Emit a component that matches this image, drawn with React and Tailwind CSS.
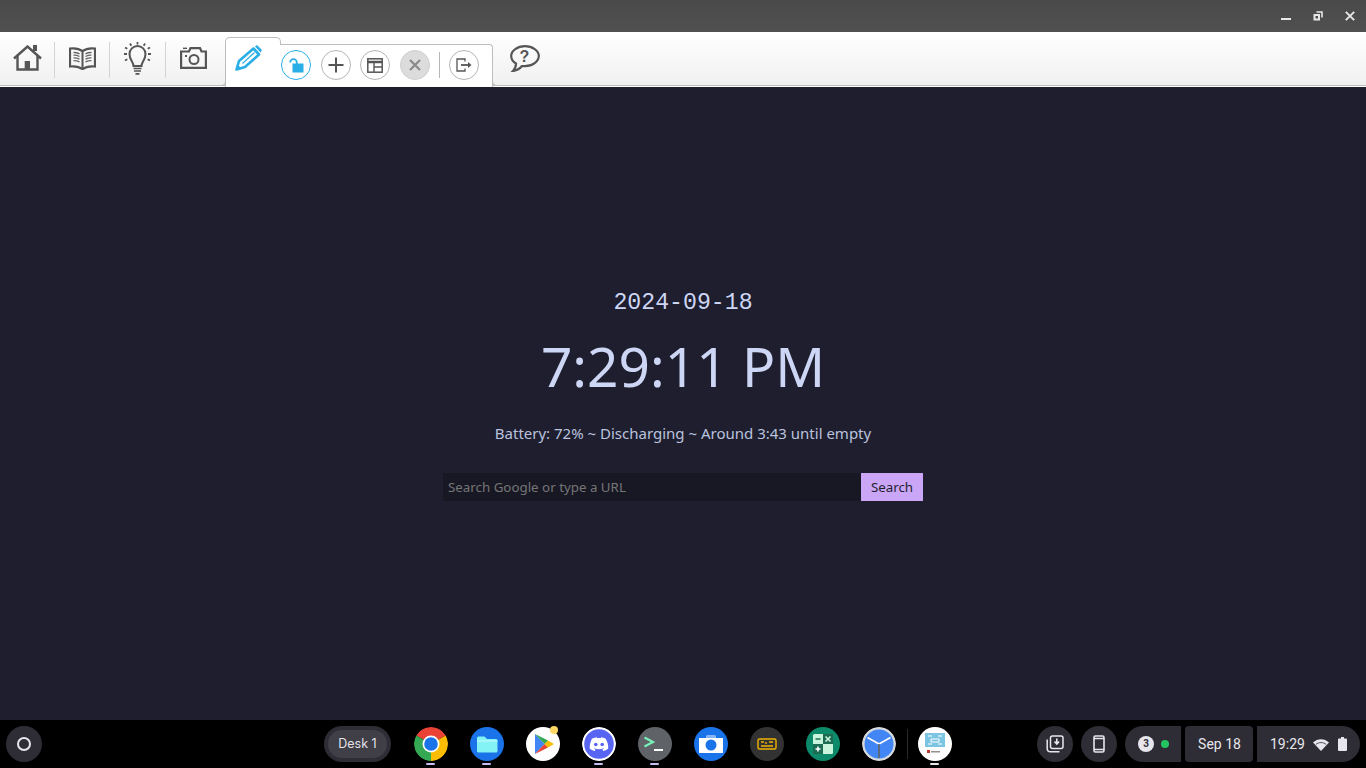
import React from "react";

const Sep = () => <div className="w-px h-[36px] bg-[#d4d4d4] mt-[10px] shrink-0" />;

const gray = "#555555";
const blue = "#2aaee6";

const HomeIcon = () => (
  <svg width="30" height="27" viewBox="0 0 30 27" fill="none">
    <path d="M1 13.500 14.500 1.500 28 13.500" stroke={gray} strokeWidth="2.400" />
    <path d="M4.500 11V24.500H24.500V11" stroke={gray} strokeWidth="2.400" />
    <rect x="11.700" y="16" width="5.300" height="8" fill={gray} />
    <rect x="20" y="0" width="4" height="6" fill={gray} />
  </svg>
);

const BookIcon = () => (
  <svg width="27" height="23" viewBox="0 0 27 23" fill="none">
    <path d="M13.500 4C10 1.500 5 1 1 1.500V19.500C5 19 10 19.500 13.500 22C17 19.500 22 19 26 19.500V1.500C22 1 17 1.500 13.500 4Z" stroke={gray} strokeWidth="2.200" />
    <path d="M13.500 4V22" stroke={gray} strokeWidth="2" />
    <path d="M4.500 5.500c2-.1 4 .3 6 1.300M4.500 8.200c2-.1 4 .3 6 1.300M4.500 10.900c2-.1 4 .3 6 1.300M4.500 13.600c2-.1 4 .3 6 1.300M22.500 5.500c-2-.1-4 .3-6 1.300M22.500 8.200c-2-.1-4 .3-6 1.300M22.500 10.900c-2-.1-4 .3-6 1.300M22.500 13.600c-2-.1-4 .3-6 1.300" stroke="#666666" strokeWidth="1.300" />
  </svg>
);

const BulbIcon = () => (
  <svg width="27" height="33" viewBox="0 0 27 33" fill="none">
    <path d="M9.500 24C9.500 20 5.500 18 5.500 12a8 8 0 0 1 16 0C21.500 18 17.500 20 17.500 24Z" stroke={gray} strokeWidth="2" />
    <path d="M9.500 26.500h8M10 29h7M11.500 31.800h4" stroke={gray} strokeWidth="1.700" />
    <path d="M13.500 0v2.500M6 1.500l1.300 2.300M21 1.500l-1.300 2.300M1 5.500l2.300 1.300M26 5.500l-2.300 1.300M0 12h3M24 12h3M1 18.500l2.300-1.300M26 18.500l-2.300-1.300" stroke={gray} strokeWidth="1.800" />
  </svg>
);

const CameraIcon = () => (
  <svg width="27" height="22" viewBox="0 0 27 22" fill="none">
    <path d="M1.100 4.500H9L10.500 1.100H20L21.500 4.500H25.900V20.900H1.100Z" stroke={gray} strokeWidth="2.200" />
    <circle cx="14" cy="12.500" r="4.500" stroke={gray} strokeWidth="2" />
    <rect x="5" y="8" width="2" height="2" fill={gray} />
    <path d="M3 1.300H7" stroke={gray} strokeWidth="1.400" />
  </svg>
);

const PencilIcon = () => (
  <svg width="27" height="26" viewBox="0 0 27 26" fill="none">
    <path d="M1.500 24.500 4 16 18.500 3.500 24 9.500 10 22Z" stroke={blue} strokeWidth="2.600" strokeLinejoin="round" />
    <path d="M7.500 18.500 19.500 7.500" stroke={blue} strokeWidth="1.100" />
    <path d="M.5 25.500 3 20l3 3Z" fill={blue} />
    <path d="M20 1.500 22 0 27 5 25.500 7.500Z" fill={blue} />
  </svg>
);

const RoundBtn = ({ active, grayed, children }) => (
  <div
    className={`w-[30px] h-[30px] rounded-full border flex items-center justify-center shrink-0 ${
      active
        ? "border-[#2aaee6] bg-white"
        : grayed
          ? "border-[#cfcfcf] bg-[#dcdcdc]"
          : "border-[#b5b5b5] bg-white"
    }`}
  >
    {children}
  </div>
);

const Toolbar = () => (
  <div className="h-[55px] flex bg-gradient-to-b from-white to-[#f0f0f0] shrink-0">
    <div className="w-[225px] h-[54px] flex border-b border-[#bdbdbd] shadow-[0_1px_0_#ffffff] shrink-0">
      <div className="w-[54px] pl-[13px] pt-[13px] shrink-0">
        <HomeIcon />
      </div>
      <Sep />
      <div className="w-[54px] pl-[14px] pt-[15px] shrink-0">
        <BookIcon />
      </div>
      <Sep />
      <div className="w-[55px] pl-[14px] pt-[10px] shrink-0">
        <BulbIcon />
      </div>
      <Sep />
      <div className="w-[54px] pl-[14px] pt-[15px] shrink-0">
        <CameraIcon />
      </div>
    </div>
    {/* active pen tab */}
    <div className="w-[56px] mt-[5px] h-[50px] bg-white border border-b-0 border-[#bdbdbd] rounded-tl-[5px] rounded-tr-[5px] pt-[7px] pl-[9px] shrink-0 relative">
      <PencilIcon />
      <div className="absolute -left-[6px] bottom-[1px] w-[6px] h-[6px] bg-[#f0f0f0] border-r border-b border-[#bdbdbd] rounded-br-[5px]" />
    </div>
    <div className="w-[213px] mt-[12px] h-[43px] bg-white border border-l-0 border-b-0 border-[#bdbdbd] rounded-tr-[4px] flex items-start pt-[5px] -ml-px shrink-0 relative">
      <div className="ml-[1px] flex gap-[9.500px]">
        <RoundBtn active>
          <svg width="15" height="15" viewBox="0 0 15 15" fill="none">
            <path d="M1.200 4.500a3.300 3.300 0 0 1 6.600 0V6" stroke={blue} strokeWidth="1.800" />
            <rect x="3.500" y="5.500" width="11" height="9" fill={blue} />
          </svg>
        </RoundBtn>
        <RoundBtn>
          <svg width="16" height="16" viewBox="0 0 16 16" fill="none">
            <path d="M8 .500v15M.500 8h15" stroke={gray} strokeWidth="2" />
          </svg>
        </RoundBtn>
        <RoundBtn>
          <svg width="16" height="15" viewBox="0 0 16 15" fill="none">
            <rect x=".8" y=".8" width="14.400" height="13.400" stroke={gray} strokeWidth="1.500" />
            <path d="M.8 4h14.400" stroke={gray} strokeWidth="2.500" />
            <path d="M7 4v10M7 9h8" stroke={gray} strokeWidth="1.400" />
          </svg>
        </RoundBtn>
        <RoundBtn grayed>
          <svg width="12" height="12" viewBox="0 0 12 12" fill="none">
            <path d="M1 1l10 10M11 1 1 11" stroke="#8c8c8c" strokeWidth="2.400" />
          </svg>
        </RoundBtn>
      </div>
      <div className="w-px h-[26px] bg-[#b5b5b5] mx-[9px] mt-[2px]" />
      <RoundBtn>
        <svg width="16" height="14" viewBox="0 0 16 14" fill="none">
          <path d="M9 3.500V1H1v12h8v-2.500" stroke={gray} strokeWidth="1.300" />
          <path d="M5 7h7.500" stroke={gray} strokeWidth="1.800" />
          <path d="M12 4l3.500 3-3.500 3Z" fill={gray} />
        </svg>
      </RoundBtn>
      <div className="absolute -right-[6px] bottom-[1px] w-[6px] h-[6px] bg-[#f0f0f0] border-l border-b border-[#bdbdbd] rounded-bl-[5px]" />
    </div>
    <div className="flex-1 h-[54px] border-b border-[#bdbdbd] shadow-[0_1px_0_#ffffff] pl-[17px] pt-[13px]">
      <svg width="30" height="27" viewBox="0 0 30 27" fill="none">
        <path d="M15 1.200C7.500 1.200 1.200 5.500 1.200 11C1.200 14.500 3.500 17 6 18.500C6 21 5 24 3 26C6.500 25.500 10 23.500 12 21C13 21 14 21.200 15 21.200C22.500 21.200 28.800 16.500 28.800 11C28.800 5.500 22.500 1.200 15 1.200Z" stroke={gray} strokeWidth="2.200" />
        <text x="14.500" y="17" textAnchor="middle" fontSize="16" fontWeight="700" fontFamily="'Liberation Sans', sans-serif" fill={gray}>?</text>
      </svg>
    </div>
  </div>
);

const TitleBar = () => (
  <div className="h-[32px] bg-gradient-to-b from-[#4a4a4a] to-[#505050] flex justify-end items-center shrink-0">
    <svg width="10" height="3" viewBox="0 0 10 3" className="mt-[6px]">
      <rect width="10" height="2" fill="#e8e8e8" />
    </svg>
    <svg width="10" height="10" viewBox="0 0 10 10" className="ml-[22px]" fill="none">
      <path d="M3.500 1h5.500v5.500" stroke="#e8e8e8" strokeWidth="1.600" />
      <rect x="1" y="3.500" width="5.500" height="5.500" fill="#e8e8e8" stroke="#e8e8e8" strokeWidth="1" />
      <rect x="2.500" y="5" width="2.500" height="2.500" fill="#4d4d4d" />
    </svg>
    <svg width="10" height="10" viewBox="0 0 10 10" className="ml-[22px] mr-[11px]" fill="none">
      <path d="M.8.800l8.400 8.400M9.200.800.800 9.200" stroke="#e8e8e8" strokeWidth="1.900" />
    </svg>
  </div>
);

const Main = () => (
  <div className="flex-1 bg-[#1e1e2e] flex flex-col items-center text-[#cdd6f4] font-['Noto_Sans',sans-serif] min-h-0">
    <div className="mt-[203px] h-[26px] leading-[26px] text-[23.200px] font-['Liberation_Mono',monospace]">2024-09-18</div>
    <div className="mt-[10px] h-[80px] leading-[80px] text-[55px]">7:29:11 PM</div>
    <div className="mt-[16px] h-[22px] leading-[22px] text-[15px] text-[#bac2de]">Battery: 72% ~ Discharging ~ Around 3:43 until empty</div>
    <div className="mt-[29px] flex w-[480px] h-[28px]">
      <div className="w-[418px] bg-[#181825] pl-[5px] leading-[28px] text-[13.330px] text-[#757575]">Search Google or type a URL</div>
      <div className="w-[62px] bg-[#cba6f7] text-[#1e1e2e] text-[13.330px] leading-[28px] text-center">Search</div>
    </div>
  </div>
);

const AppIcon = ({ dot, white, children }) => (
  <div className="w-[56px] h-[48px] flex flex-col items-center relative shrink-0">
    <div className="mt-[7px] w-[34px] h-[34px] rounded-full overflow-hidden">{children}</div>
    {dot && <div className={`absolute left-[23px] bottom-[3px] w-[9px] h-[2px] rounded-full ${white ? "bg-[#e8e8e8]" : "bg-[#c9bdf0]"}`} />}
  </div>
);

const Shelf = () => (
  <div className="h-[48px] bg-black flex items-center shrink-0 font-['Inter',sans-serif]">
    <div className="ml-[6px] w-[36px] h-[36px] rounded-full bg-[#2e2d35] flex items-center justify-center shrink-0">
      <div className="w-[14px] h-[14px] rounded-full border-2 border-[#e8e6ed]" />
    </div>
    <div className="ml-[282px] w-[67px] h-[36px] rounded-full bg-[#2e2d35] flex items-center justify-center shrink-0">
      <div className="w-[59px] h-[28px] rounded-full bg-[#403e47] text-[#e3e1e8] text-[12.500px] leading-[28px] text-center">Desk 1</div>
    </div>
    <div className="ml-[12px] flex">
      <AppIcon dot>
        <svg width="34" height="34" viewBox="0 0 34 34">
          <path d="M17 17 2.300 8.500A17 17 0 0 1 31.700 8.500Z" fill="#ea4335" />
          <path d="M17 17 17 34A17 17 0 0 1 2.300 8.500Z" fill="#34a853" />
          <path d="M17 17 31.700 8.500A17 17 0 0 1 17 34Z" fill="#fbbc04" />
          <circle cx="17" cy="17" r="8.500" fill="#fff" />
          <circle cx="17" cy="17" r="6.800" fill="#1a73e8" />
        </svg>
      </AppIcon>
      <AppIcon dot>
        <svg width="34" height="34" viewBox="0 0 34 34">
          <rect width="34" height="34" fill="#1a73e8" />
          <path d="M7 11a1.500 1.500 0 0 1 1.500-1.500h6l2.500 2.500h9a1.500 1.500 0 0 1 1.500 1.500V24a1.500 1.500 0 0 1-1.500 1.500h-17A1.500 1.500 0 0 1 7 24Z" fill="#84f3f6" />
          <path d="M7 13.500h20.500v1H7Z" fill="#c6fbfb" />
        </svg>
      </AppIcon>
      <div className="w-[56px] h-[48px] flex flex-col items-center relative shrink-0">
        <div className="mt-[7px] w-[34px] h-[34px] rounded-full bg-white overflow-hidden">
          <svg width="34" height="34" viewBox="0 0 34 34">
            <path d="M9 7v20l9.500-10Z" fill="#4285f4" />
            <path d="M9 7l9.500 10 3.500-3.500Z" fill="#34a853" />
            <path d="M9 27l9.500-10 3.500 3.500Z" fill="#ea4335" />
            <path d="M22 13.500l-3.500 3.500 3.500 3.500 6-3.500Z" fill="#fbbc04" />
          </svg>
        </div>
        <div className="absolute left-[35px] top-[6px] w-[8px] h-[8px] rounded-full bg-[#fdd663]" />
      </div>
      <AppIcon dot>
        <svg width="34" height="34" viewBox="0 0 34 34">
          <circle cx="17" cy="17" r="17" fill="#fff" />
          <circle cx="17" cy="17" r="14.800" fill="#5865f2" />
          <path d="M10.500 11.500c1.500-.7 3-1.200 4.300-1.300l.5 1c1.200-.2 2.300-.2 3.400 0l.5-1c1.400.2 2.800.6 4.300 1.300 2.100 3.200 3 6.500 2.700 10.200-1.700 1.200-3.300 2-4.800 2.400l-1-1.700c.6-.2 1.100-.5 1.600-.8l-.4-.3c-3 1.400-6.200 1.400-9.200 0l-.4.300c.5.300 1 .6 1.600.8l-1 1.700c-1.500-.4-3.100-1.200-4.800-2.400-.3-3.700.6-7 2.200-10.200Z" fill="#fff" />
          <circle cx="13.800" cy="17.500" r="1.800" fill="#5865f2" />
          <circle cx="20.200" cy="17.500" r="1.800" fill="#5865f2" />
        </svg>
      </AppIcon>
      <AppIcon dot>
        <svg width="34" height="34" viewBox="0 0 34 34" fill="none">
          <rect width="34" height="34" fill="#5f6368" />
          <path d="M6.500 10.500 15 15l-8.500 4.500" stroke="#78f0b8" strokeWidth="2.200" />
          <path d="M16 23h9" stroke="#fff" strokeWidth="2" />
        </svg>
      </AppIcon>
      <AppIcon>
        <svg width="34" height="34" viewBox="0 0 34 34">
          <rect width="34" height="34" fill="#1a73e8" />
          <path d="M5 11h7l1-3h8l1 3h7v15H5Z" fill="#fff" />
          <path d="M13 8h8l1 3H12Z" fill="#8ab4f8" />
          <circle cx="17" cy="18" r="5.500" fill="#1a73e8" />
        </svg>
      </AppIcon>
      <AppIcon>
        <svg width="34" height="34" viewBox="0 0 34 34" fill="none">
          <rect width="34" height="34" fill="#323232" />
          <rect x="8" y="12" width="18" height="10" rx="1.500" stroke="#f0b400" strokeWidth="1.400" />
          <path d="M11 15h3M16 15v2M19 15h4M11 19h12" stroke="#f0b400" strokeWidth="1.400" />
        </svg>
      </AppIcon>
      <AppIcon>
        <svg width="34" height="34" viewBox="0 0 34 34">
          <rect width="34" height="34" fill="#0d8a6a" />
          <rect x="7" y="7" width="20" height="20" rx="1.500" fill="#c9f5dd" />
          <rect x="17" y="7" width="10" height="10" fill="#1c6b53" />
          <rect x="7" y="17" width="10" height="10" fill="#1c6b53" />
          <path d="M9.500 12h5" stroke="#1c6b53" strokeWidth="1.600" />
          <path d="M19.500 9.500l5 5M24.500 9.500l-5 5" stroke="#c9f5dd" strokeWidth="1.600" />
          <path d="M9.500 22h5M12 19.500v5" stroke="#fff" strokeWidth="1.600" />
          <path d="M19.500 20.500h5M19.500 23.500h5" stroke="#c9f5dd" strokeWidth="1.600" />
        </svg>
      </AppIcon>
      <AppIcon>
        <svg width="34" height="34" viewBox="0 0 34 34" fill="none">
          <circle cx="17" cy="17" r="17" fill="#d5d9dd" />
          <circle cx="17" cy="17" r="14.500" fill="#4285f4" />
          <path d="M17 17 5.500 10.500M17 17 28.500 10.500" stroke="#fff" strokeWidth="1.600" />
          <path d="M17 17v14" stroke="#5f6368" strokeWidth="1.600" />
        </svg>
      </AppIcon>
    </div>
    <div className="w-px h-[30px] bg-[#2a2a2a] shrink-0" />
    <div className="-ml-px">
      <AppIcon dot white>
        <svg width="34" height="34" viewBox="0 0 34 34">
          <rect width="34" height="34" fill="#fff" />
          <rect x="7" y="6" width="20" height="14" fill="#7cc5e2" />
          <path d="M10 9h4M20 9h4M10 17h4M20 17h4M13 12h8v3h-8Z" stroke="#fff" strokeWidth="1" fill="none" />
          <rect x="9" y="23" width="3" height="3" fill="#c0392b" />
          <rect x="13" y="24" width="9" height="1.500" fill="#9a8f8f" />
        </svg>
      </AppIcon>
    </div>
    <div className="ml-[74px] w-[36px] h-[36px] rounded-full bg-[#2e2d35] flex items-center justify-center shrink-0">
      <svg width="18" height="18" viewBox="0 0 18 18" fill="none">
        <rect x="4.500" y="1" width="12.500" height="12.500" rx="2" stroke="#e8e6ed" strokeWidth="1.500" />
        <path d="M1.200 4.500v9A3.300 3.300 0 0 0 4.500 16.800h9" stroke="#e8e6ed" strokeWidth="1.500" />
        <path d="M10.800 3.500v5M8.500 6.500l2.300 2.500 2.300-2.500" stroke="#e8e6ed" strokeWidth="1.600" />
      </svg>
    </div>
    <div className="ml-[8px] w-[36px] h-[36px] rounded-full bg-[#2e2d35] flex items-center justify-center shrink-0">
      <svg width="12" height="18" viewBox="0 0 12 18" fill="none">
        <rect x="1" y="1" width="10" height="16" rx="1.500" stroke="#e8e6ed" strokeWidth="1.600" />
        <path d="M1 3.500h10M1 14.500h10" stroke="#e8e6ed" strokeWidth="1.400" />
      </svg>
    </div>
    <div className="ml-[8px] w-[56px] h-[36px] rounded-l-full rounded-r-[4px] bg-[#2e2d35] flex items-center pl-[13px] shrink-0">
      <div className="w-[16px] h-[16px] rounded-full bg-[#e8e6ed] text-[#2e2d35] text-[10px] font-bold leading-[16px] text-center font-['Roboto',sans-serif]">3</div>
      <div className="ml-[7px] w-[8px] h-[8px] rounded-full bg-[#22c55e]" />
    </div>
    <div className="ml-[4px] w-[68px] h-[36px] rounded-[4px] bg-[#2e2d35] text-[#e8e6ed] text-[14px] leading-[36px] text-center pl-px font-['Roboto',sans-serif] shrink-0">Sep 18</div>
    <div className="ml-[4px] w-[103px] h-[36px] rounded-l-[4px] rounded-r-full bg-[#2e2d35] flex items-center pl-[13px] shrink-0">
      <span className="text-[#e8e6ed] text-[14px] font-['Roboto',sans-serif]">19:29</span>
      <svg width="16" height="13" viewBox="0 0 16 13" className="ml-[8px]" fill="none">
        <path d="M0 4.500C4.500 0 11.500 0 16 4.500L8 13Z" fill="#e8e6ed" />
        <path d="M2.800 6.500C5.800 3.900 10.200 3.900 13.200 6.500" stroke="#2e2d35" strokeWidth=".8" />
      </svg>
      <svg width="9" height="14" viewBox="0 0 9 14" className="ml-[9px]">
        <path d="M3 0h3v1.500h2a1 1 0 0 1 1 1V13a1 1 0 0 1-1 1H1a1 1 0 0 1-1-1V2.500a1 1 0 0 1 1-1h2Z" fill="#e8e6ed" />
      </svg>
    </div>
  </div>
);

export default function App() {
  return (
    <div className="w-[1366px] h-[768px] flex flex-col overflow-hidden">
      <TitleBar />
      <Toolbar />
      <Main />
      <Shelf />
    </div>
  );
}
